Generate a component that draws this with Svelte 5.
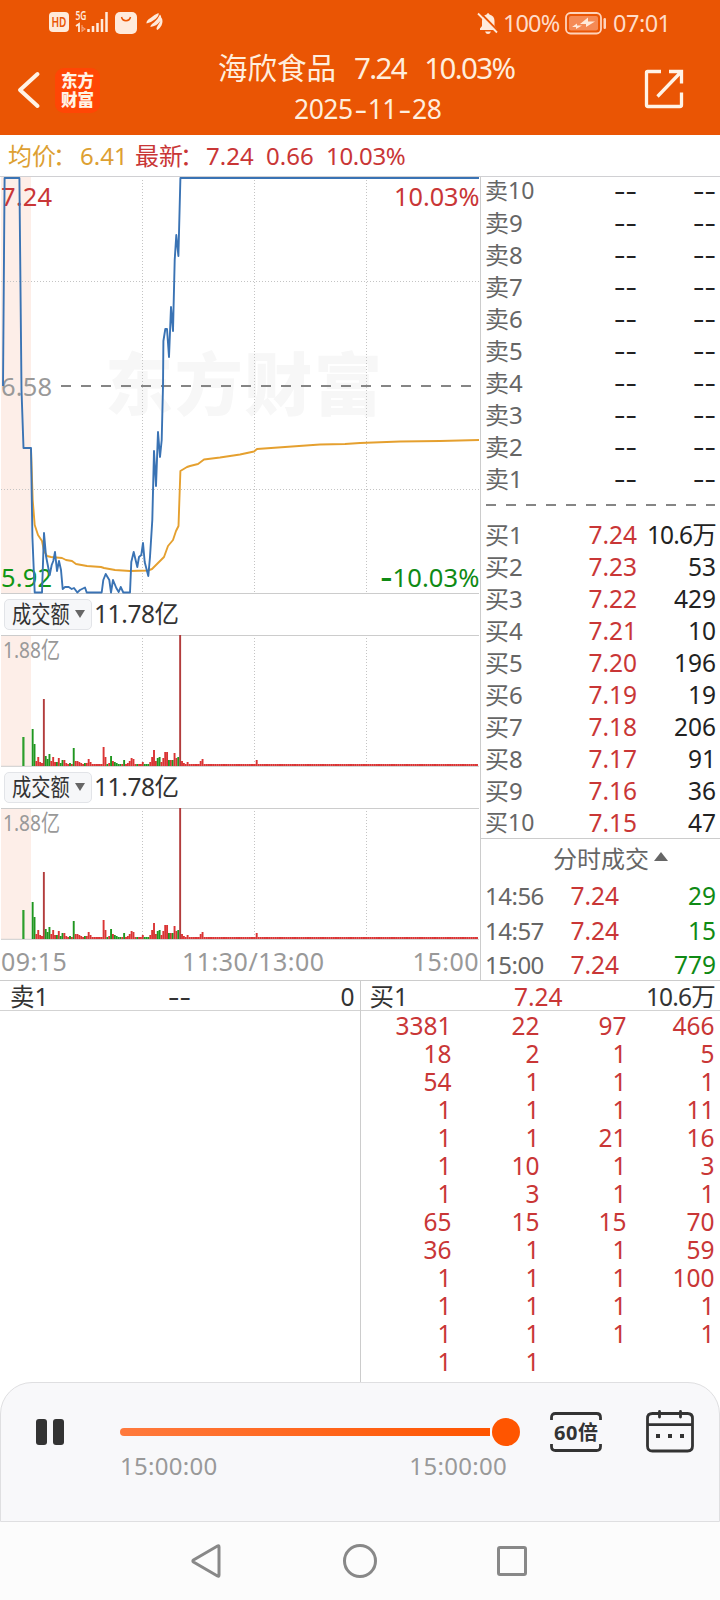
<script>
  const sells = [10, 9, 8, 7, 6, 5, 4, 3, 2, 1];
  const buys = [
    ['7.24', '10.6万'], ['7.23', '53'], ['7.22', '429'], ['7.21', '10'], ['7.20', '196'],
    ['7.19', '19'], ['7.18', '206'], ['7.17', '91'], ['7.16', '36'], ['7.15', '47'],
  ];
  const trades = [
    ['14:56', '7.24', '29'],
    ['14:57', '7.24', '15'],
    ['15:00', '7.24', '779'],
  ];
  const queue = [
    [3381, 22, 97, 466],
    [18, 2, 1, 5],
    [54, 1, 1, 1],
    [1, 1, 1, 11],
    [1, 1, 21, 16],
    [1, 10, 1, 3],
    [1, 3, 1, 1],
    [65, 15, 15, 70],
    [36, 1, 1, 59],
    [1, 1, 1, 100],
    [1, 1, 1, 1],
    [1, 1, 1, 1],
    [1, 1],
  ];

  // one bar per minute from 09:30, negative = down minute (green)
  const volume = [
    -37, -22, 5, 9, 4, 3, 67, -10, -7, -12, 5, 9, 4, -4, 8, -3, -6, 6, 3, 2,
    -3, 2, -18, 5, 5, 4, 3, 2, -3, 3, 7, 4, 2, 2, 2, 2, 2, 2, 19, 9,
    -2, 3, -10, 5, -4, -3, -2, -2, 2, -6, 2, 3, 5, 8, 7, 2, -2, 2, 2, 4,
    -2, -2, -2, 4, 9, 16, 5, -8, -9, 4, 8, 14, 14, -6, 6, -6, 13, 8, -9, 131,
    5, 3, 2, 4, 2, 2, 2, 2, 2, 2, 5, 7,
  ];
  while (volume.length < 239) volume.push(volume.length === 120 ? 6 : 2);

  const price =
    '3,209 4.6,1 19.4,1 21.5,213 23.5,271 31,271 32.4,360 34.7,415.5 42,415.5 44,356 46,379 49.7,398 51.7,388 53.3,384 55,375 57,394 59,384 61,393 62.7,412 65,410 68.7,410 71.7,412 74,411 77.3,415.5 80,413 85,410.5 86.7,415.5 101.7,415.5 103.3,403 105.7,397 109.3,403 111,415.5 113,403 116.3,411 118.7,415 120.7,410 123.3,415.5 130,415.5 131.3,385 133.7,375 137.3,390 139,380 141.3,378 143,366 144.7,385 148.3,399 150,380 152.3,343 154,274 156,309 158,255 160,280 161.7,263 163,209 163.4,164 165.3,152 167,152 169,180 171,130 173,154 174.7,83 176.3,58 178.4,79 180.4,1 479,1';
  const average =
    '31,272 32.7,323 34.7,348 38,358 42,364 44,374 47,379 51,380 62,381 66,383 72,384 76,387 87,389 101,390 104,391 115,393 130,394 148,393.5 152,392 164,380 168,369 173,363 176,354 178.5,349 180.4,294 187,290 190,289 198,287 204,282.5 220,280.5 240,277.5 254,274.5 257,272 285,270 320,267.5 345,267 360,266 400,264.5 440,264 479,263';
</script>

{#snippet volumeChart()}
  <div class="vol-head">
    <button class="pick"><span class="squeeze">成交额</span><i class="down"></i></button>
    <span class="amount">11.78亿</span>
  </div>
  <svg class="vol" width="480" height="132" viewBox="0 0 480 132">
    <rect x="1" y="0" width="30" height="131" fill="#fdeee8" />
    <line class="frame" x1="1" y1="0.5" x2="479" y2="0.5" />
    <line class="frame" x1="1" y1="131.3" x2="479" y2="131.3" />
    {#each [142.5, 254.5, 366.5] as x}
      <line class="grid" x1={x} y1="3" x2={x} y2="131" />
    {/each}
    <text x="3" y="22.500" class="max" textLength="57" lengthAdjust="spacingAndGlyphs">1.88亿</text>
    <rect x="22.3" y="102" width="2.2" height="29" fill="#2c9e2c" />
    {#each volume as v, i}
      <rect
        x={31.7 + i * 1.867}
        y={131 - Math.abs(v)}
        width="1.9"
        height={Math.abs(v)}
        fill={v < 0 ? '#1f961f' : v > 60 ? '#b23c3c' : '#da3434'}
      />
    {/each}
  </svg>
{/snippet}

<div class="screen" lang="zh-CN">
  <header>
    <div class="status">
      <svg class="left-icons" width="120" height="26" viewBox="0 0 120 26">
        <rect x="1" y="3" width="20" height="20" rx="4" fill="#ffeadb" />
        <text x="3.500" y="18" font-size="13.500" font-weight="600" fill="#ea5504" textLength="15" lengthAdjust="spacingAndGlyphs">HD</text>
        <text x="27.5" y="11" font-size="12" font-weight="600" fill="#ffeadb" textLength="11" lengthAdjust="spacingAndGlyphs">5G</text>
        <path d="M28 17l3-2v8" stroke="#ffeadb" stroke-width="1.8" fill="none" />
        <path d="M34 16v7M34 18l3 2-3 2" stroke="#f6a57c" stroke-width="1.1" fill="none" />
        <path d="M40.5 20v3M45 17v6M49.5 14v9M54 10v13M58.5 3v20" stroke="#ffeadb" stroke-width="2.5" />
        <rect x="67" y="3" width="22" height="22" rx="5" fill="#ffeadb" />
        <path d="M73.5 8a4.6 4.6 0 0 0 9 0" stroke="#ea5504" stroke-width="1.5" fill="none" />
        <path d="M98.500 14.500q-.5-3 4-5.500 4-3.500 8-5 1 2.500-3 6-3.500 3-9 4.500zM102.500 18q-.5-2 3.500-4.500 4-3.500 6-8 2.500 3 0 7-3.500 4.500-9.500 5.500zM109.500 21q-2-1 0-4 3-4 4-8.500 2 3.500 0 8-2 3.500-4 4.500z" fill="#ffeadb" />
      </svg>
      <svg class="bell" width="22" height="24" viewBox="0 0 22 24">
        <path d="M3 19V17.5l2-2.5V10q0-5.500 4.600-6.500Q11 .5 12.500 3.500 17.500 4.800 17.500 10v5l2 2.500V19zM8 20.500h6q-1 2.500-3 2.500t-3-2.500z" fill="#ffeadb" />
        <path d="M3.500 2L21.500 20.500" stroke="#ea5504" stroke-width="2" />
        <path d="M1 2.500L20 21.500" stroke="#ffeadb" stroke-width="1.800" />
      </svg>
      <span class="pct">100%</span>
      <svg class="battery" width="42" height="23" viewBox="0 0 42 23">
        <rect x="1" y="1" width="35" height="20.500" rx="4.500" fill="none" stroke="#ffd3bb" stroke-width="1.800" />
        <rect x="4" y="4" width="29" height="14.500" rx="2" fill="#f58a55" />
        <path d="M15 12l8-6.500v4h7l-9 5.500v-3zM7 15l5-3.500v2h5l-6 3.500v-2z" fill="#ffeadb" />
        <rect x="38.500" y="6" width="2.500" height="11" rx="1.200" fill="#ffd3bb" />
      </svg>
      <span class="clock">07:01</span>
    </div>
    <div class="title-bar">
      <svg class="back" width="24" height="40" viewBox="0 0 24 40">
        <path d="M20.500 4L3 20 20.500 36" fill="none" stroke="#fff3e6" stroke-width="4" stroke-linecap="round" stroke-linejoin="round" />
      </svg>
      <div class="logo">东方<br />财富</div>
      <div class="title">
        <div class="name"><span>海欣食品</span><span class="n">7.24</span><span class="n">10.03%</span></div>
        <div class="date">2025<b>-</b>11<b>-</b>28</div>
      </div>
      <svg class="share" width="40" height="40" viewBox="0 0 40 40">
        <path d="M17 2.500H3.500Q2.500 2.500 2.500 3.500V36Q2.500 37.500 4 37.500H36Q37.500 37.500 37.500 36V23.500M25 2.500H37.500V14.500M37 3L13.500 27.500" fill="none" stroke="#fff3e6" stroke-width="3.300" />
      </svg>
    </div>
  </header>

  <div class="summary">
    <span class="avg key">均价<i>：</i></span><span class="avg a1">6.41</span>
    <span class="red key">最新<i>：</i></span><span class="red n1">7.24</span><span class="red n2">0.66</span><span class="red n3">10.03%</span>
  </div>

  <main>
    <section class="charts">
      <svg class="price" width="480" height="417" viewBox="0 0 480 417">
        <rect x="1" y="0" width="30" height="416" fill="#fdeee8" />
        <text x="105" y="233" class="watermark" textLength="277">东方财富</text>
        {#each [142.5, 254.5, 366.5] as x}
          <line class="grid" x1={x} y1="3" x2={x} y2="416" />
        {/each}
        <line class="grid" x1="1" y1="104.500" x2="479" y2="104.500" />
        <line class="grid" x1="1" y1="312.500" x2="479" y2="312.500" />
        <line class="frame" x1="1" y1="416.500" x2="479" y2="416.500" />
        <line x1="61" y1="209" x2="472" y2="209" stroke="#858585" stroke-width="2" stroke-dasharray="10 10" />
        <text x="1" y="28.500" fill="#c93636" textLength="51">7.24</text>
        <text x="394" y="28.500" fill="#c93636" textLength="85.500" lengthAdjust="spacingAndGlyphs">10.03%</text>
        <text x="1" y="218.500" fill="#999" textLength="51">6.58</text>
        <text x="1" y="409.500" fill="#0f9614" textLength="51">5.92</text>
        <text x="479.500" y="409.500" fill="#0f8a14" text-anchor="end" class="low"><tspan font-size="38" dy="3.200">-</tspan><tspan dy="-3.200">10.03%</tspan></text>
        <polyline points={average} fill="none" stroke="#e5a02f" stroke-width="1.900" stroke-linejoin="round" />
        <polyline points={price} fill="none" stroke="#3a73b4" stroke-width="1.900" stroke-linejoin="round" />
      </svg>
      {@render volumeChart()}
      {@render volumeChart()}
      <div class="axis"><span>09:15</span><span>11:30/13:00</span><span>15:00</span></div>
    </section>

    <section class="book">
      <div class="sells">
        {#each sells as n}
          <div class="row"><span class="label" class:ten={n === 10}>卖{n}</span><span class="p dash">--</span><span class="q dash">--</span></div>
        {/each}
      </div>
      <svg class="split" width="229" height="2"><line x1="0" y1="1" x2="229" y2="1" stroke="#858585" stroke-width="2" stroke-dasharray="10 10" /></svg>
      <div class="buys">
        {#each buys as [p, q], i}
          <div class="row"><span class="label" class:ten={i === 9}>买{i + 1}</span><span class="p">{p}</span><span class="q" class:wan={q.endsWith('万')}>{q}</span></div>
        {/each}
      </div>
      <div class="ticks-title">分时成交<i class="up"></i></div>
      {#each trades as [t, p, q]}
        <div class="tick"><span class="label">{t}</span><span class="p">{p}</span><span class="q">{q}</span></div>
      {/each}
    </section>
  </main>

  <div class="queues">
    <div class="side">
      <div class="side-head"><span>卖1</span><span class="mid dash">--</span><span>0</span></div>
    </div>
    <div class="side buy">
      <div class="side-head"><span>买1</span><span class="mid red">7.24</span><span class="wan">10.6万</span></div>
      <div class="orders">
        {#each queue as line}
          {#each line as n}<span>{n}</span>{/each}
        {/each}
      </div>
    </div>
  </div>

  <div class="player">
    <svg class="pause" width="28" height="26"><rect width="11" height="26" rx="3" fill="#333" /><rect x="17" width="11" height="26" rx="3" fill="#333" /></svg>
    <div class="seek">
      <div class="bar"><div class="track"></div><div class="knob"></div></div>
      <div class="times"><span>15:00:00</span><span>15:00:00</span></div>
    </div>
    <svg class="speed" width="52" height="40" viewBox="0 0 52 40">
      <path d="M1.500 8V5.500Q1.500 1.500 5.500 1.500H46.500Q50.500 1.500 50.500 5.500V8M1.500 32v2.500Q1.500 38.500 5.500 38.500H46.500Q50.500 38.500 50.500 34.500V32" fill="none" stroke="#333" stroke-width="2.800" />
      <text x="4" y="28" font-size="20" font-weight="700" fill="#333" textLength="44">60倍</text>
    </svg>
    <svg class="cal" width="48" height="43" viewBox="0 0 48 43">
      <path d="M1.500 8.500Q1.500 3.500 6.500 3.500H41.500Q46.500 3.500 46.500 8.500V36Q46.500 41 41.500 41H6.500Q1.500 41 1.500 36zM1.500 14.700H46.500" fill="none" stroke="#333" stroke-width="2.800" />
      <path d="M13.500 1.500V7M34.500 1.500V7" stroke="#333" stroke-width="2.800" stroke-linecap="round" />
      <path d="M10 26h4M22 26h4M34 26h4" stroke="#333" stroke-width="4" />
    </svg>
  </div>

  <nav>
    <svg width="340" height="36" viewBox="0 0 340 36">
      <path d="M26.500 3Q28 2.200 28 4V32Q28 33.800 26.500 33L2.500 19Q1.200 18 2.500 17z" fill="none" stroke="#888" stroke-width="3" />
      <circle cx="169" cy="18" r="15.500" fill="none" stroke="#888" stroke-width="3" />
      <rect x="307.500" y="4.500" width="27" height="27" rx="1.500" fill="none" stroke="#888" stroke-width="3" />
    </svg>
  </nav>
</div>

<style>
  :global(body) {
    margin: 0;
    background: #fff;
  }
  .screen {
    width: 720px;
    height: 1600px;
    display: flex;
    flex-direction: column;
    overflow: hidden;
    background: #fff;
    color: #333;
    font: 24.5px/32px 'Noto Sans', 'Noto Sans CJK SC', sans-serif;
    white-space: nowrap;
  }
  svg {
    display: block;
    flex: none;
    overflow: visible;
  }
  header {
    height: 135px;
    flex: none;
    background: #ea5504;
    color: #ffeedd;
  }
  .status {
    display: flex;
    height: 46px;
    align-items: center;
    color: #ffdcc8;
    font-size: 23.500px;
  }
  .left-icons {
    margin-left: 48px;
    margin-top: -2px;
  }
  .bell {
    margin-left: 309px;
  }
  .pct {
    width: 58px;
    margin-left: 4px;
    letter-spacing: -0.9px;
  }
  .battery {
    margin-left: 4px;
  }
  .clock {
    margin-left: 6px;
    letter-spacing: -0.5px;
  }
  .title-bar {
    display: flex;
    align-items: flex-start;
  }
  .back {
    margin: 24px 0 0 17px;
  }
  .logo {
    width: 45px;
    height: 42px;
    padding-top: 3px;
    margin: 22px 0 0 14px;
    border-radius: 9px;
    background: #ff4605;
    color: #fff3e6;
    text-align: center;
    font: 900 16.500px/19px 'Noto Sans CJK SC', sans-serif;
  }
  .title {
    width: 300px;
    margin-left: 118px;
  }
  .name {
    display: flex;
    margin-top: 2px;
    font-size: 29.500px;
    line-height: 40px;
  }
  .name .n {
    margin-left: 18px;
    letter-spacing: -1.6px;
  }
  .date {
    margin: 1px 0 0 76px;
    font-size: 26.500px;
    line-height: 40px;
    letter-spacing: -0.5px;
  }
  .date b {
    display: inline-block;
    width: 15px;
    font-weight: 400;
    text-align: center;
    transform: scaleX(1.5);
  }
  .share {
    margin: 23px 0 0 126px;
  }
  .summary {
    display: flex;
    height: 41px;
    flex: none;
    padding-left: 8px;
    font-size: 24px;
    line-height: 42px;
  }
  .avg {
    color: #dda032;
  }
  .red {
    color: #c93636;
  }
  .key {
    width: 72px;
  }
  .key i {
    margin-left: -3px;
    font-style: normal;
  }
  .a1 {
    width: 55px;
  }
  .n1 {
    width: 60px;
    margin-left: -1px;
  }
  .n2 {
    width: 60px;
  }
  .n3 {
    letter-spacing: -0.3px;
  }
  main {
    display: flex;
    height: 805px;
    flex: none;
    box-sizing: border-box;
    border-top: 1px solid #d0d0d3;
    border-bottom: 1px solid #ccc;
  }
  .charts {
    width: 480px;
  }
  .frame {
    stroke: #ccc;
    stroke-width: 1;
  }
  .grid {
    stroke: #c4c4c4;
    stroke-width: 1;
    stroke-dasharray: 1 2;
  }
  .price text {
    font-size: 25.500px;
  }
  .price .low {
    letter-spacing: 0.1px;
  }
  .price .watermark {
    font-size: 68px;
    font-weight: 900;
    fill: #f7f7f7;
  }
  .vol .max {
    font-size: 22.500px;
    fill: #999;
  }
  .vol-head {
    display: flex;
    height: 41px;
    align-items: center;
  }
  .pick {
    display: flex;
    align-items: center;
    width: 88px;
    height: 31px;
    margin-left: 4px;
    padding: 0 0 2px 7px;
    border: 1px solid #e2e4e8;
    border-radius: 5px;
    background: #f6f7f9;
    color: #333;
    font: inherit;
    font-size: 24px;
  }
  .squeeze {
    width: 58px;
    flex: none;
    transform: scaleX(0.8);
    transform-origin: 0 50%;
  }
  .down {
    margin-left: 5px;
    border: 5px solid transparent;
    border-top: 8px solid #666;
    border-bottom: 0;
  }
  .amount {
    margin-left: 2px;
    margin-top: -1px;
    font-size: 24.500px;
    letter-spacing: -0.4px;
  }
  .axis {
    display: flex;
    height: 41px;
    padding: 0 1px;
    color: #999;
    font-size: 25px;
    line-height: 43px;
    letter-spacing: 0.500px;
  }
  .axis span:first-child {
    width: 181px;
  }
  .axis span:last-child {
    flex: 1;
    text-align: right;
  }
  .book {
    width: 235px;
    padding: 0 4px 0 0;
    border-left: 1px solid #ccc;
    color: #222;
  }
  .row,
  .tick {
    display: flex;
    height: 32px;
    padding-left: 4px;
  }
  .sells {
    margin-top: -2px;
  }
  .label {
    width: 70px;
    color: #666;
    font-size: 24px;
  }
  .ten {
    font-size: 23px;
    line-height: 31px;
  }
  .row .p {
    width: 82px;
    color: #c93636;
    text-align: right;
  }
  .row .p.dash {
    color: #222;
  }
  .q {
    flex: 1;
    text-align: right;
  }
  .wan {
    letter-spacing: -0.8px;
  }
  .dash {
    transform: scaleX(1.450);
    transform-origin: 100% 50%;
  }
  .split {
    margin: 9px 0 0 5px;
  }
  .buys {
    margin-top: 13px;
  }
  .ticks-title {
    display: flex;
    align-items: center;
    height: 39px;
    padding-left: 72px;
    margin: -1px -4px 0 0;
    border-top: 1px solid #ccc;
    color: #666;
    font-size: 24px;
  }
  .up {
    margin-left: 5px;
    margin-top: -5px;
    border: 7px solid transparent;
    border-bottom: 9px solid #666;
    border-top: 0;
  }
  .tick {
    height: 34.500px;
    line-height: 36px;
  }
  .tick .label {
    letter-spacing: -0.5px;
  }
  .tick .p {
    width: 64px;
    color: #c93636;
    text-align: right;
  }
  .tick .q {
    color: #0f8a14;
  }
  .queues {
    display: flex;
    flex: 1;
  }
  .side {
    width: 360px;
  }
  .buy {
    border-left: 1px solid #ccc;
  }
  .side-head {
    display: grid;
    grid-template-columns: 96px 97px 1fr;
    height: 29px;
    padding: 0 5px 0 10px;
    border-bottom: 1px solid #d3d3d3;
    line-height: 32px;
  }
  .side-head span:last-child {
    text-align: right;
  }
  .side-head .mid {
    text-align: right;
  }
  .side-head .dash {
    margin-right: 12px;
  }
  .buy .side-head {
    padding-left: 9px;
  }
  .orders {
    display: grid;
    grid-template-columns: 91px 88px 87px 88px;
    grid-auto-rows: 28px;
    line-height: 29px;
    color: #c93636;
    text-align: right;
  }
  .player {
    display: flex;
    height: 140px;
    flex: none;
    box-sizing: border-box;
    border: 1px solid #dfdfe1;
    border-radius: 32px 32px 0 0;
    background: #f8f8fa;
  }
  .pause {
    margin: 36px 0 0 35px;
  }
  .seek {
    width: 400px;
    margin: 35px 0 0 56px;
  }
  .bar {
    display: flex;
    align-items: center;
    height: 28px;
  }
  .track {
    width: 370px;
    height: 8px;
    border-radius: 4px 0 0 4px;
    background: linear-gradient(90deg, #ff7a3d, #ff5500);
  }
  .knob {
    width: 28px;
    height: 28px;
    margin-left: 2px;
    border-radius: 50%;
    background: #ff5500;
  }
  .times {
    display: flex;
    justify-content: space-between;
    width: 387px;
    color: #999;
    font-size: 24px;
    line-height: 40px;
    letter-spacing: 0.3px;
  }
  .speed {
    margin: 29px 0 0 30px;
  }
  .cal {
    margin: 27px 0 0 44px;
  }
  nav {
    height: 78px;
    flex: none;
    display: flex;
    align-items: center;
    background: #fcfcfc;
  }
  nav svg {
    margin-left: 191px;
  }
</style>
